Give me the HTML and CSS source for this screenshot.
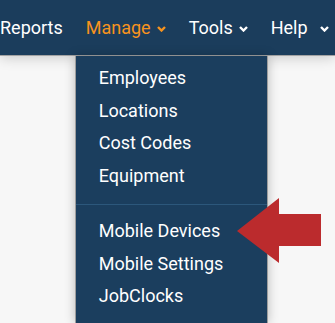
FILE: index.html
```html
<!DOCTYPE html>
<html>
<head>
<meta charset="utf-8">
<link rel="stylesheet" href="styles.css">
</head>
<body>
<header class="nav">
  <div class="nav-item">Reports</div>
  <div class="nav-item active">Manage<svg class="chev" viewBox="0 0 9 6" width="9" height="6"><path d="M1 1 L4.5 4.5 L8 1" /></svg>
    <ul class="menu">
      <li>Employees</li>
      <li>Locations</li>
      <li>Cost Codes</li>
      <li>Equipment</li>
      <li class="divider"></li>
      <li>Mobile Devices</li>
      <li>Mobile Settings</li>
      <li>JobClocks</li>
    </ul>
  </div>
  <div class="nav-item">Tools<svg class="chev" viewBox="0 0 9 6" width="9" height="6"><path d="M1 1 L4.5 4.5 L8 1" /></svg></div>
  <div class="nav-item help">Help<svg class="chev" viewBox="0 0 9 6" width="9" height="6"><path d="M1 1 L4.5 4.5 L8 1" /></svg></div>
</header>
<svg class="pointer" viewBox="0 0 86 67" width="86" height="67"><polygon points="1,34 43,1 43,17 85,17 85,49 43,49 43,66" /></svg>
</body>
</html>
```
FILE: styles.css
```css
html, body {
  margin: 0;
  padding: 0;
}
body {
  background: #f7f7f7;
  font-family: Roboto, "Liberation Sans", sans-serif;
  width: 335px;
  height: 323px;
  overflow: hidden;
  position: relative;
}
.nav {
  height: 55px;
  background: #1b3d5c;
  border-bottom: 1px solid #a3a3a3;
  display: flex;
  align-items: center;
  gap: 23px;
  padding-left: 0;
  box-shadow: 0 2px 12px rgba(0,0,0,0.18);
  position: relative;
  z-index: 2;
}
.nav-item {
  color: #ffffff;
  font-size: 18px;
  line-height: 22px;
  display: flex;
  align-items: center;
  white-space: nowrap;
  position: relative;
  padding-top: 1px;
}
.nav-item.active {
  color: #f7931e;
}
.chev {
  margin-left: 6px;
  margin-top: 2px;
  fill: none;
  stroke: currentColor;
  stroke-width: 2.4;
  stroke-linecap: butt;
}
.help .chev {
  margin-left: 12px;
}
.menu {
  position: absolute;
  top: 40px;
  left: -11px;
  width: 191px;
  height: 261px;
  margin: 0;
  padding: 6px 0 0 0;
  list-style: none;
  background: #1b3e5e;
  border-left: 1px solid #9d9d9d;
  border-right: 1px solid #9d9d9d;
  box-shadow: 0 0 10px rgba(0,0,0,0.25);
  color: #ffffff;
  overflow: hidden;
}
.menu li {
  height: 32.5px;
  line-height: 32.5px;
  padding-left: 23px;
  font-size: 18px;
}
.menu li.divider {
  height: 1px;
  margin: 12px 0 10px;
  padding: 0;
  background: #2c577b;
}
.pointer {
  position: absolute;
  left: 236px;
  top: 197px;
  fill: #bb2b2d;
  z-index: 3;
}
```
